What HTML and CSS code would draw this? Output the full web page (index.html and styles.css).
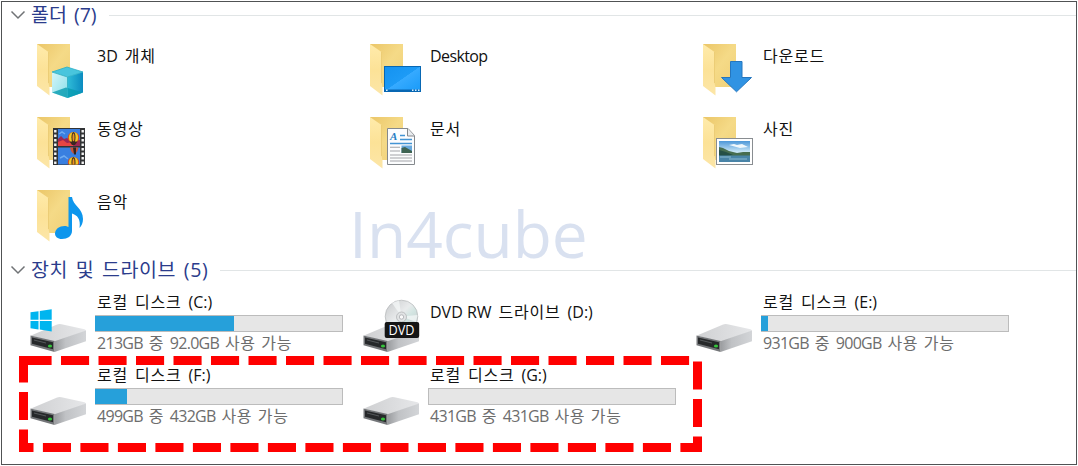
FILE: index.html
```html
<!DOCTYPE html>
<html lang="ko">
<head>
  <meta charset="UTF-8">
  <meta name="viewport" content="width=device-width, initial-scale=1.0">
  <title>내 PC</title>
  <link rel="stylesheet" href="styles.css">
</head>
<body>
  <!-- shared icon shapes -->
  <svg class="defs" width="0" height="0">
    <defs>
      <linearGradient id="folder-back" x1="0" y1="0" x2="1" y2="1">
        <stop offset="0" stop-color="#ebc668"/>
        <stop offset="0.5" stop-color="#f5da87"/>
        <stop offset="1" stop-color="#f0d078"/>
      </linearGradient>
      <linearGradient id="folder-front" x1="0" y1="0" x2="0" y2="1">
        <stop offset="0" stop-color="#ffebab"/>
        <stop offset="0.5" stop-color="#fce297"/>
        <stop offset="1" stop-color="#fce6a8"/>
      </linearGradient>
      <linearGradient id="drive-top" x1="0" y1="0" x2="1" y2="0">
        <stop offset="0" stop-color="#cfd0d2"/>
        <stop offset="1" stop-color="#e6e7e9"/>
      </linearGradient>
      <linearGradient id="drive-side" x1="0" y1="0" x2="1" y2="0">
        <stop offset="0" stop-color="#9a9c9f"/>
        <stop offset="0.35" stop-color="#c0c2c5"/>
        <stop offset="1" stop-color="#d3d5d8"/>
      </linearGradient>
      <linearGradient id="screen" x1="0" y1="0" x2="1" y2="1">
        <stop offset="0" stop-color="#1492f0"/>
        <stop offset="0.49" stop-color="#1d9bf6"/>
        <stop offset="0.5" stop-color="#36aaff"/>
        <stop offset="1" stop-color="#189af8"/>
      </linearGradient>
      <linearGradient id="cube-right" x1="0" y1="0" x2="1" y2="0">
        <stop offset="0" stop-color="#30bcd8"/>
        <stop offset="1" stop-color="#0b8bc0"/>
      </linearGradient>
      <linearGradient id="cube-left" x1="0" y1="0" x2="1" y2="1">
        <stop offset="0" stop-color="#d4f5f9"/>
        <stop offset="1" stop-color="#8adfe9"/>
      </linearGradient>
      <linearGradient id="disc" x1="0" y1="0" x2="1" y2="1">
        <stop offset="0" stop-color="#c6c8ca"/>
        <stop offset="0.45" stop-color="#e9ebec"/>
        <stop offset="0.6" stop-color="#d3e5e2"/>
        <stop offset="1" stop-color="#c3c5c8"/>
      </linearGradient>
      <linearGradient id="sky" x1="0" y1="0" x2="0" y2="1">
        <stop offset="0" stop-color="#4d97d8"/>
        <stop offset="0.5" stop-color="#c5e3f5"/>
        <stop offset="1" stop-color="#e5f2f8"/>
      </linearGradient>
    </defs>

    <symbol id="folder" viewBox="0 0 58 56">
      <path d="M8 1H41V44H19L8 40Z" fill="url(#folder-back)"/>
      <path d="M8 1L19.5 9V40L20.5 44.5V52.5L8 43Z" fill="url(#folder-front)"/>
      <path d="M19.5 9V40" stroke="#e7c66c" stroke-width="0.7"/>
    </symbol>

    <symbol id="drive" viewBox="0 0 58 56">
      <path d="M2 38.5L27.5 27.7Q30 26.8 32.5 27.3L55.5 32.3Q57 32.8 57 34L25.5 45Z" fill="url(#drive-top)"/>
      <path d="M25.5 44.3L57 33.5V44.3L25.5 55Z" fill="url(#drive-side)"/>
      <path d="M1.5 38.5L25.5 44V55L1.5 48.3Z" fill="#747679"/>
      <path d="M3 40.5L24 45.3V52.3L3 46.8Z" fill="#26282a"/>
      <path d="M5 43L17 46" stroke="#55585b" stroke-width="1"/>
      <ellipse cx="21" cy="49" rx="2.1" ry="1.6" fill="#35c43b"/>
    </symbol>

    <symbol id="balloon" viewBox="0 0 12 14">
      <ellipse cx="6" cy="5.5" rx="5.7" ry="5.5" fill="#d84b1f"/>
      <ellipse cx="6" cy="5.5" rx="4.6" ry="5.5" fill="#f0ca27"/>
      <ellipse cx="6" cy="5.5" rx="2" ry="5.5" fill="#372a25"/>
      <ellipse cx="6" cy="5.5" rx="1" ry="4" fill="#ef9420"/>
      <path d="M2 9.5H10L7.5 13H4.5Z" fill="#3c2620"/>
    </symbol>
  </svg>

  <div class="window">
    <section class="group">
      <div class="group-header">
        <svg class="chevron" width="16" height="10" viewBox="0 0 16 10"><path d="M1.5 1.5L8 8L14.5 1.5"/></svg>
        <h2 class="title-folders">폴더 (7)</h2>
        <span class="rule"></span>
      </div>

      <div class="items folders">
        <div class="item">
          <svg class="icon" viewBox="0 0 58 56">
            <use href="#folder"/>
            <path d="M23 29L38 24L54 29L38.5 34Z" fill="#49c5dd"/>
            <path d="M23 29L38.5 34V55L23 49.5Z" fill="url(#cube-left)"/>
            <path d="M38.5 34L54 29V49.5L38.5 55Z" fill="url(#cube-right)"/>
            <path d="M23 49.5L37 44.5L54 49.5L38.5 55Z" fill="#079bb0" opacity="0.8"/>
            <path d="M23 29L38 24L54 29L38.5 34ZM38.5 34V55" fill="none" stroke="#28aec7" stroke-width="0.8"/>
          </svg>
          <span class="name"><span class="latin">3D</span> 개체</span>
        </div>

        <div class="item">
          <svg class="icon" viewBox="0 0 58 56">
            <use href="#folder"/>
            <rect x="22.5" y="23.5" width="36" height="25" fill="url(#screen)" stroke="#0867b3"/>
            <path d="M23 47.3H58" stroke="#0867b3" stroke-width="1.8"/>
            <path d="M24 47.2h1.6M50 47.2h1.5M53 47.2h1.5M56 47.2h1.5" stroke="#d9f0ff" stroke-width="1.5"/>
          </svg>
          <span class="name"><span class="latin tight">Desktop</span></span>
        </div>

        <div class="item">
          <svg class="icon" viewBox="0 0 58 56">
            <use href="#folder"/>
            <path d="M35.5 18.5H47V34.5H56.5L41.5 48.8L26.5 34.5H35.5Z" fill="#3093e3" stroke="#2476bf"/>
          </svg>
          <span class="name">다운로드</span>
        </div>

        <div class="item">
          <svg class="icon" viewBox="0 0 58 56">
            <use href="#folder"/>
            <rect x="24" y="12" width="32" height="37" fill="#323436"/>
            <path d="M26.3 14V49M53.7 14V49" stroke="#f4f4f4" stroke-width="2.4" stroke-dasharray="2.5 2"/>
            <rect x="29" y="13" width="22" height="17" fill="#397fe0"/>
            <rect x="29" y="31.5" width="22" height="17" fill="#397fe0"/>
            <path d="M29 23L32 20L35 23L38 22L42 25L51 24V30H29Z" fill="#9d2853"/>
            <path d="M29 26L34 24L38 27L44 26V30H29Z" fill="#e74544"/>
            <path d="M30 18l3-2 3 2M31 42l4-2 4 3" stroke="#6fabf1" stroke-width="1.5" fill="none"/>
            <use href="#balloon" x="38" y="16" width="13" height="14"/>
            <path d="M41 31.5h8.5q-.5 4-3 6h-2.5q-2.5-2-3-6" fill="#c95439"/>
            <path d="M44 31.5h3v7h-2Z" fill="#302522"/>
            <svg x="38" y="41" width="13" height="7.5" viewBox="0 0 13 7.5"><use href="#balloon" width="13" height="14"/></svg>
          </svg>
          <span class="name">동영상</span>
        </div>

        <div class="item">
          <svg class="icon" viewBox="0 0 58 56">
            <use href="#folder"/>
            <path d="M25.5 12.5H46L52.5 19.5V48.5H25.5Z" fill="#fcfdfe" stroke="#85898d"/>
            <path d="M45.5 12.5V20H52.5" fill="#e9ecef" stroke="#85898d"/>
            <text class="doc-letter" x="28" y="24">A</text>
            <path d="M38 19.5h5M38 23.5h12M28 27.5h22" stroke="#4395d4" stroke-width="1.5"/>
            <path d="M28 31.2h10M28 35h10M28 39h22M28 42h22M28 45h22" stroke="#a1a4a7" stroke-width="1.1"/>
            <rect x="39.5" y="29.5" width="10.5" height="7.5" fill="#68a9dd"/>
            <path d="M39.5 32L43 31L50 35V37H39.5Z" fill="#3e6352"/>
          </svg>
          <span class="name">문서</span>
        </div>

        <div class="item">
          <svg class="icon" viewBox="0 0 58 56">
            <use href="#folder"/>
            <rect x="21.5" y="22.5" width="36" height="26" fill="#fff" stroke="#898d91"/>
            <rect x="24" y="25" width="31" height="21" fill="url(#sky)"/>
            <path d="M34 29l5-1 3 1 5-1 6 3-8 1Z" fill="#f1f8fc"/>
            <path d="M24 31L28 32L34 35L42 37L48 36L55 36V40H24Z" fill="#476d50"/>
            <path d="M24 34L31 36L38 39L24 41Z" fill="#254f46"/>
            <rect x="24" y="39.5" width="31" height="6.5" fill="#4984a7"/>
            <path d="M25 41h11M34 43h18" stroke="#8bbad2" stroke-width="1"/>
          </svg>
          <span class="name">사진</span>
        </div>

        <div class="item">
          <svg class="icon" viewBox="0 0 58 56">
            <use href="#folder"/>
            <path d="M39.5 8H43C44 17 54 19 54 30C54 34 52.5 37 50.5 39C52 30 48 26 43 24.5V42C43 47 38.5 50 33 50C28.5 50 26 47.5 26 44.5C26 40 30.5 37 35.5 37C37 37 38.5 37.5 39.5 38Z" fill="#0d96ed"/>
          </svg>
          <span class="name">음악</span>
        </div>
      </div>
    </section>

    <section class="group">
      <div class="group-header">
        <svg class="chevron" width="16" height="10" viewBox="0 0 16 10"><path d="M1.5 1.5L8 8L14.5 1.5"/></svg>
        <h2 class="title-drives">장치 및 드라이브 (5)</h2>
        <span class="rule"></span>
      </div>

      <div class="items drives">
        <div class="item">
          <svg class="icon" viewBox="0 0 58 56">
            <use href="#drive"/>
            <path d="M1.5 15.3L9.5 14.2V22.7H1.5ZM10.8 14L22.7 12.3V22.7H10.8ZM1.5 24H9.5V32.4L1.5 31.3ZM10.8 24H22.7V34.4L10.8 32.6Z" fill="#00b5ef"/>
          </svg>
          <div class="info">
            <span class="name">로컬 디스크 <span class="latin">(C:)</span></span>
            <div class="bar"><div class="fill" style="width: 56.7%"></div></div>
            <span class="space"><span class="latin tight">213GB</span> 중 <span class="latin tight">92.0GB</span> 사용 가능</span>
          </div>
        </div>

        <div class="item">
          <svg class="icon" viewBox="0 0 58 56">
            <use href="#drive"/>
            <circle cx="39.5" cy="19.5" r="16.3" fill="url(#disc)" stroke="#b3b6b8" stroke-width="0.7"/>
            <path d="M39.5 19.5L30 6L37 3.5ZM39.5 19.5L54 25L55.5 18Z" fill="#f7f9f9" opacity="0.7"/>
            <circle cx="39.5" cy="20" r="5" fill="#e1e3e4" stroke="#b2b5b8" stroke-width="0.8"/>
            <circle cx="39.5" cy="20" r="2.2" fill="#fafafa" stroke="#a8abae" stroke-width="0.8"/>
            <rect x="22.7" y="25" width="34.5" height="16" rx="2" fill="#151515"/>
            <text class="dvd-label" x="39.5" y="38" textLength="26" lengthAdjust="spacingAndGlyphs">DVD</text>
          </svg>
          <div class="info info-single">
            <span class="name"><span class="latin">DVD RW</span> 드라이브 <span class="latin">(D:)</span></span>
          </div>
        </div>

        <div class="item">
          <svg class="icon" viewBox="0 0 58 56"><use href="#drive"/></svg>
          <div class="info">
            <span class="name">로컬 디스크 <span class="latin">(E:)</span></span>
            <div class="bar"><div class="fill" style="width: 3%"></div></div>
            <span class="space"><span class="latin tight">931GB</span> 중 <span class="latin tight">900GB</span> 사용 가능</span>
          </div>
        </div>

        <div class="item">
          <svg class="icon" viewBox="0 0 58 56"><use href="#drive"/></svg>
          <div class="info">
            <span class="name">로컬 디스크 <span class="latin">(F:)</span></span>
            <div class="bar"><div class="fill" style="width: 13%"></div></div>
            <span class="space"><span class="latin tight">499GB</span> 중 <span class="latin tight">432GB</span> 사용 가능</span>
          </div>
        </div>

        <div class="item">
          <svg class="icon" viewBox="0 0 58 56"><use href="#drive"/></svg>
          <div class="info">
            <span class="name">로컬 디스크 <span class="latin">(G:)</span></span>
            <div class="bar"></div>
            <span class="space"><span class="latin tight">431GB</span> 중 <span class="latin tight">431GB</span> 사용 가능</span>
          </div>
        </div>
      </div>
    </section>

    <div class="watermark">In4cube</div>
    <svg class="highlight" width="683" height="96" viewBox="0 0 683 96">
      <path d="M4.5 4.5H678.5V91.5H4.5Z"/>
    </svg>
  </div>
</body>
</html>
```
FILE: styles.css
```css
* {
  box-sizing: border-box;
}
body {
  margin: 0;
  padding: 1px;
  height: 466px;
  background: #fff;
  color: #111;
  font-family: "Open Sans", "Noto Sans CJK KR", sans-serif;
  overflow: hidden;
}
.defs {
  position: absolute;
}
.window {
  position: relative;
  width: 1076px;
  height: 464px;
  border: 1px solid #505254;
}
.group-header {
  display: flex;
  align-items: center;
  height: 26px;
  padding-left: 8px;
}
.chevron {
  flex: none;
  margin-right: 5px;
}
.chevron path {
  fill: none;
  stroke: #707376;
  stroke-width: 1.5;
}
h2 {
  flex: none;
  margin: 0;
  font-size: 19.5px;
  font-weight: 400;
  line-height: 26px;
  letter-spacing: 0.6px;
  word-spacing: 2px;
  color: #2b3c8c;
  white-space: nowrap;
}
.title-folders {
  width: 78px;
  letter-spacing: 0;
}
.title-drives {
  width: 189px;
}
.rule {
  flex: 1;
  height: 1px;
  background: #e1e5e6;
}
.items {
  display: grid;
  grid-template-columns: repeat(3, 333px);
  grid-auto-rows: 73px;
  padding-left: 27px;
}
.folders {
  height: 229px;
  padding-top: 15px;
}
.drives {
  padding-top: 12px;
}
.item {
  display: flex;
  align-items: flex-start;
}
.icon {
  flex: none;
  width: 58px;
  height: 56px;
  overflow: visible;
}
.name {
  font-size: 16px;
  line-height: 22px;
  letter-spacing: 0.8px;
  word-spacing: 2px;
  white-space: nowrap;
}
.latin {
  letter-spacing: 0;
  word-spacing: 0;
}
.tight {
  letter-spacing: -0.6px;
}
.folders .name {
  margin: 2px 0 0 10px;
}
.drives .icon {
  margin-top: 2px;
}
.info {
  display: flex;
  flex-direction: column;
  margin: -4px 0 0 8px;
}
.info .name,
.space {
  padding-left: 2px;
}
.info-single {
  margin-top: 6px;
}
.bar {
  width: 248px;
  height: 17px;
  margin-top: 2px;
  border: 1px solid #bcbcbc;
  background: #e6e6e6;
}
.fill {
  height: 100%;
  margin-left: -1px;
  background: #26a0da;
}
.space {
  font-size: 16px;
  line-height: 22px;
  letter-spacing: 0.6px;
  word-spacing: 1px;
  color: #6d6d6d;
  white-space: nowrap;
}
.space .tight {
  letter-spacing: -0.7px;
}
.doc-letter {
  font: italic bold 11px "Liberation Serif", serif;
  fill: #277fc4;
}
.dvd-label {
  font: 14px "Open Sans", sans-serif;
  fill: #fff;
  text-anchor: middle;
}
.watermark {
  position: absolute;
  left: 347px;
  top: 187px;
  font-size: 64px;
  line-height: 90px;
  color: rgba(186, 200, 228, 0.55);
}
.highlight {
  position: absolute;
  left: 17px;
  top: 354px;
}
.highlight path {
  fill: none;
  stroke: #f00;
  stroke-width: 9;
  stroke-dasharray: 28.1 9.4;
}
```
